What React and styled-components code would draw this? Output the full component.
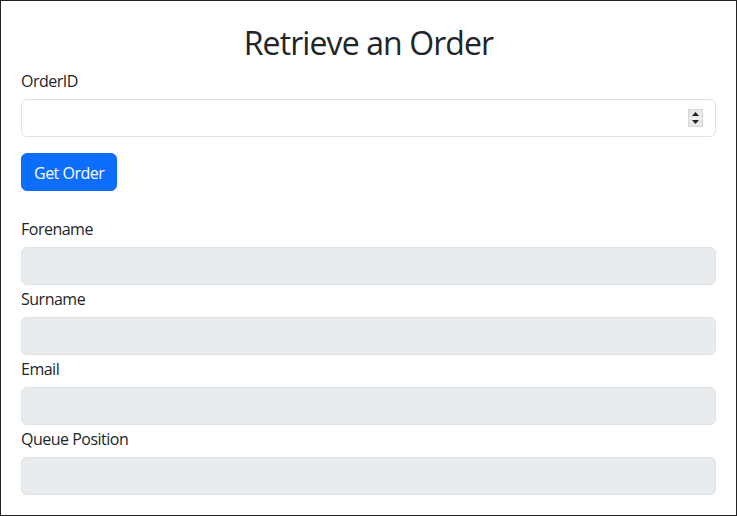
import React from 'react'
import styled, { createGlobalStyle } from "styled-components";

const GlobalStyle = createGlobalStyle`
  *, *::before, *::after { box-sizing: border-box; }
  html, body { margin: 0; padding: 0; }
  body {
    font-family: "Open Sans", "Noto Sans", sans-serif;
    font-size: 16px;
    line-height: 1.5;
    letter-spacing: -0.5px;
    color: #212529;
    background: #fff;
  }
`;

const Page = styled.div`
  width: 737px;
  height: 516px;
  border: 1px solid #222;
  padding: 20px;
  overflow: hidden;
`;

const Title = styled.h2`
  margin: 0 0 5px;
  padding-top: 3px;
  font-size: 32px;
  font-weight: 400;
  line-height: 38px;
  letter-spacing: -0.9px;
  text-align: center;
`;

const Label = styled.label`
  display: block;
  margin-bottom: 8px;
  height: 24px;
  padding-top: 2px;
  line-height: 24px;
`;

const Field = styled.div`
  position: relative;
`;

const Input = styled.input`
  display: block;
  width: 100%;
  height: 38px;
  padding: 6px 12px;
  font: inherit;
  letter-spacing: inherit;
  color: #212529;
  background: ${(p) => (p.disabled ? "#e9ecef" : "#fff")};
  border: 1px solid #dee2e6;
  border-radius: 6px;
  outline: none;
`;

const Spinner = styled.div`
  position: absolute;
  right: 13px;
  top: 10px;
  width: 15px;
  height: 18px;
  display: flex;
  flex-direction: column;
  gap: 1px;
  background: #fafafa;
  border: 1px solid #d6d6d6;
`;

const SpinHalf = styled.div`
  flex: 1;
  background: #e9e9e9;
  display: flex;
  align-items: center;
  justify-content: center;
`;

const Button = styled.button`
  margin-top: 16px;
  margin-bottom: 24px;
  height: 38px;
  padding: 7px 12px 5px;
  font: inherit;
  letter-spacing: inherit;
  color: #fff;
  background: #0d6efd;
  border: 1px solid #0d6efd;
  border-radius: 6px;
  cursor: pointer;
`;

const Arrow = ({ up }) => (
  <svg width="7" height="4" viewBox="0 0 7 4">
    <path d={up ? "M0 4 L3.5 0 L7 4 Z" : "M0 0 L3.5 4 L7 0 Z"} fill="#222" />
  </svg>
);

const App = () => {
  const fields = ["Forename", "Surname", "Email", "Queue Position"];
  return (
    <>
      <GlobalStyle />
      <Page>
        <Title>Retrieve an Order</Title>
        <Label htmlFor="orderId">OrderID</Label>
        <Field>
          <Input id="orderId" type="text" />
          <Spinner>
            <SpinHalf><Arrow up /></SpinHalf>
            <SpinHalf><Arrow /></SpinHalf>
          </Spinner>
        </Field>
        <Button>Get Order</Button>
        {fields.map((f) => (
          <div key={f}>
            <Label>{f}</Label>
            <Input type="text" disabled />
          </div>
        ))}
      </Page>
    </>
  )
}

export default App;
